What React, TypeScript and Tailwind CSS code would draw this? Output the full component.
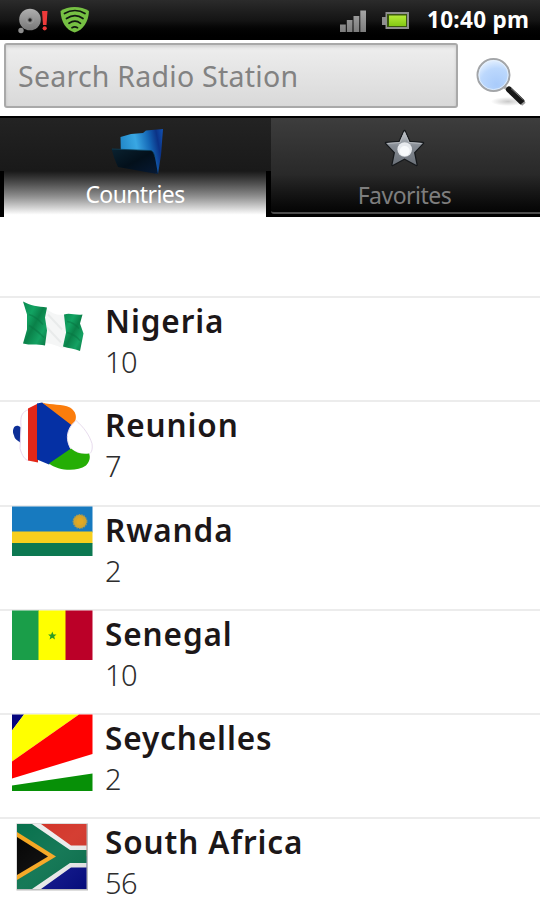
import { useState } from 'react';
import type { ReactNode } from 'react';

type Country = {
  name: string;
  stations: number;
  flag: ReactNode;
};

const NigeriaFlag = () => (
  <>
    <defs>
      <linearGradient id="ngFold" x1="0" y1="0" x2="1" y2="1">
        <stop offset="0" stopColor="#0a8a50" />
        <stop offset="0.3" stopColor="#12a362" />
        <stop offset="0.5" stopColor="#0a8149" />
        <stop offset="0.75" stopColor="#14a263" />
        <stop offset="1" stopColor="#087341" />
      </linearGradient>
    </defs>
    <path d="M45 10 C53 17 58 18 65 17 V51 C58 50 52 45 44 46 Z" fill="#f5f6f6" />
    <path d="M48 17 L62 32 M47 30 L61 45" stroke="#e9ebeb" strokeWidth="2" fill="none" />
    <path d="M23 4 C30 8 38 9 47 10 L45 20 L47 33 L45 48 C37 46 30 48 23 46 L27 32 L27 17 Z" fill="url(#ngFold)" />
    <path d="M64 17 C70 15 75 18 82.500 17 L80 26 L83.500 36 L80 53.500 C74 51 69 51 63 49 L66 35 Z" fill="url(#ngFold)" />
    <path d="M29 17 Q36 19 43 27 M29 28 Q36 32 44 40 M67 24 Q74 25 79 31 M67 35 Q75 37 80 43" stroke="#087442" strokeWidth="1.500" fill="none" opacity="0.5" />
  </>
);

const ReunionFlag = () => (
  <>
    <path d="M21 26 C15 21 11 28 14 34 C15 39 19 39 21 42 Z" fill="#0c2f97" />
    <path d="M29 8 C22 10 20 15 21 24 L20 47 C22 54 25 59 29 59 Z" fill="#ffffff" stroke="#ead8ee" strokeWidth="1" />
    <path d="M28 7 L38 2 V61 L28 59 Z" fill="#e32718" />
    <path d="M37 2 L42 1 L75 22 C67 30 66 39 71 48 L49 63 L37 58 Z" fill="#0530a4" />
    <path d="M42 1 C52 4 62 2 70 6 C76 10 77 15 75 20 L72 24 Z" fill="#fb7d0c" />
    <path d="M76 19 C84 26 89 33 92 42 C93 49 91 52 88 53 C82 53 77 51 71 48 C66 39 66 31 72 23 Z" fill="#fff" stroke="#e8dcee" strokeWidth="1" />
    <path d="M71 47 C77 52 83 53 89 52 C91 56 89 61 86 64 C76 71 58 69 49 62 Z" fill="#25ae05" />
  </>
);

const RwandaFlag = () => (
  <>
    <rect x="12" y="0" width="80.500" height="26" fill="#177abf" />
    <rect x="12" y="25" width="80.500" height="12" fill="#f7cf1d" />
    <rect x="12" y="36.500" width="80.500" height="13" fill="#0c7851" />
    <circle cx="80" cy="15" r="6.700" fill="#d4a52d" stroke="#a29a57" strokeWidth="1.500" strokeDasharray="1.500 1" />
    <circle cx="80" cy="15" r="3.500" fill="#e2a923" />
  </>
);

const SenegalFlag = () => (
  <>
    <rect x="12" y="0" width="27" height="49.500" fill="#1a9e49" />
    <rect x="38.500" y="0" width="27.500" height="49.500" fill="#ffff00" />
    <rect x="65.500" y="0" width="27" height="49.500" fill="#bb0028" />
    <path d="M52.300 21 L53.500 24 H56.500 L54.200 26 L55 29 L52.300 27.300 L49.600 29 L50.400 26 L48.100 24 H51.100 Z" fill="#2c9c25" />
  </>
);

const SeychellesFlag = () => (
  <>
    <rect x="12" y="0" width="80.500" height="76.500" fill="#fff" />
    <path d="M12 0 H24 L12 16 Z" fill="#07067e" />
    <path d="M24 0 H79 L12 47 V16 Z" fill="#ffff00" />
    <path d="M79 0 H92.500 V39.500 L12 64 V47 Z" fill="#ff0000" />
    <path d="M92.500 59 V76.500 H12 V71 Z" fill="#079007" />
  </>
);

const SouthAfricaFlag = () => (
  <>
    <defs>
      <linearGradient id="zaShade" x1="0" y1="0" x2="1" y2="1">
        <stop offset="0" stopColor="#fff" stopOpacity="0" />
        <stop offset="0.5" stopColor="#fff" stopOpacity="0.06" />
        <stop offset="1" stopColor="#000" stopOpacity="0.1" />
      </linearGradient>
    </defs>
    <rect x="16.500" y="5" width="71.500" height="67" fill="#bdbdbd" />
    <rect x="17" y="5.500" width="69.500" height="33" fill="#d23226" />
    <rect x="17" y="38" width="69.500" height="32.500" fill="#060d87" />
    <path d="M31 5.500 H41 L71 27 H86.500 V49 H71 L41 70.500 H31 Z" fill="#ececec" />
    <path d="M17 5.500 H32 L70 31.500 H86.500 V44.500 H70 L32 70.500 H17 Z" fill="#08714d" />
    <path d="M17 13.500 L56 38 L17 61.500 Z" fill="#f5a51d" />
    <path d="M17 18.500 L48 38 L17 56.500 Z" fill="#030303" />
    <rect x="17" y="5.500" width="69.500" height="65" fill="url(#zaShade)" />
  </>
);

const countries: Country[] = [
  { name: 'Nigeria', stations: 10, flag: <NigeriaFlag /> },
  { name: 'Reunion', stations: 7, flag: <ReunionFlag /> },
  { name: 'Rwanda', stations: 2, flag: <RwandaFlag /> },
  { name: 'Senegal', stations: 10, flag: <SenegalFlag /> },
  { name: 'Seychelles', stations: 2, flag: <SeychellesFlag /> },
  { name: 'South Africa', stations: 56, flag: <SouthAfricaFlag /> },
];

function StatusBar() {
  return (
    <header className="flex h-10 shrink-0 items-center bg-linear-to-b from-[#2b2b2b] via-[#151515] to-black">
      <svg width="100" height="40" viewBox="0 0 100 40">
        <defs>
          <linearGradient id="disc" x1="0" y1="0" x2="0" y2="1">
            <stop offset="0" stopColor="#b0b0b0" />
            <stop offset="1" stopColor="#777" />
          </linearGradient>
        </defs>
        <circle cx="30" cy="19.500" r="10.800" fill="url(#disc)" />
        <circle cx="30" cy="20" r="3.500" fill="#888" stroke="#9c9c9c" strokeWidth="1" />
        <circle cx="30" cy="20" r="1.700" fill="#222" />
        <circle cx="21" cy="30.500" r="2.700" fill="#8d8d8d" />
        <path d="M42 11 H47.500 L46.500 25 H43 Z" fill="#ee3a3a" />
        <circle cx="44.700" cy="28.300" r="2.100" fill="#ee3a3a" />
        <path d="M60.500 11 C68 5.500 81 5.500 89 11 C88.500 22 83 30 74.700 32.500 C66 30 61 22 60.500 11 Z" fill="#76c043" />
        <path d="M64.500 13.500 C71 9.500 79 9.500 85 13.500 M66.500 18.500 C72 14.800 78 14.800 83 18.500 M69 23.300 C73 20.500 77 20.500 80.500 23.300 M72 27.700 C74 26.500 75.500 26.500 77.500 27.700" stroke="#101810" strokeWidth="1.700" strokeLinecap="round" fill="none" />
      </svg>
      <svg className="ml-auto" width="80" height="40" viewBox="0 0 80 40">
        <defs>
          <linearGradient id="bars" x1="0" y1="0" x2="0" y2="1">
            <stop offset="0" stopColor="#a5a5a5" />
            <stop offset="1" stopColor="#7c7c7c" />
          </linearGradient>
          <linearGradient id="charge" x1="0" y1="0" x2="0" y2="1">
            <stop offset="0" stopColor="#b5ea37" />
            <stop offset="1" stopColor="#84c915" />
          </linearGradient>
        </defs>
        <path d="M10 24.500 H15.800 V32 H10 Z M16.800 20 H22.500 V32 H16.800 Z M23.500 16 H29.300 V32 H23.500 Z M30.300 10.500 H36 V32 H30.300 Z" fill="url(#bars)" />
        <path d="M52 17 H55.500 V12 H79 V29 H55.500 V25 H52 Z" fill="#8f8f8f" />
        <rect x="57" y="14" width="20" height="13" fill="#3b5710" />
        <rect x="59" y="15.500" width="17" height="10.500" fill="url(#charge)" />
      </svg>
      <span className="ml-[17px] w-[113px] text-[22.5px] leading-10 font-bold tracking-[0.3px] whitespace-nowrap text-white">10:40 pm</span>
    </header>
  );
}

function SearchBar() {
  const [query, setQuery] = useState('');

  return (
    <div className="flex h-[76px] shrink-0 pt-[3px] pl-1">
      <input
        type="text"
        value={query}
        onChange={(e) => setQuery(e.target.value)}
        placeholder="Search Radio Station"
        className="h-[65px] w-[454px] rounded-[3px] border-2 border-[#a9a9a9] bg-linear-to-b from-[#eeeeee] to-[#d9d9d9] px-3 text-[28.5px] tracking-[0.25px] text-[#777] shadow-[inset_0_2px_3px_rgba(0,0,0,0.12)] outline-none placeholder:text-[#828282]"
      />
      <button type="button" aria-label="Search" className="ml-3">
        <svg width="64" height="64" viewBox="470 43 64 64">
          <defs>
            <radialGradient id="lens" cx="0.6" cy="0.8" r="0.85">
              <stop offset="0" stopColor="#a9cbfb" />
              <stop offset="0.6" stopColor="#bcd8fd" />
              <stop offset="1" stopColor="#eef6ff" />
            </radialGradient>
            <radialGradient id="lensShadow">
              <stop offset="0" stopColor="#888" stopOpacity="0.45" />
              <stop offset="1" stopColor="#888" stopOpacity="0" />
            </radialGradient>
          </defs>
          <g transform="translate(0 0.500)">
            <ellipse cx="508" cy="96" rx="17" ry="4.500" fill="url(#lensShadow)" />
            <path d="M504 81 L510 86" stroke="#aaa" strokeWidth="3" />
            <path d="M509 84 L521.500 96" stroke="#161616" strokeWidth="6" strokeLinecap="round" />
            <path d="M511 83 L523.500 94.500" stroke="#777" strokeWidth="1" />
            <path d="M521.500 99.500 L525 96.500" stroke="#999" strokeWidth="2" />
            <circle cx="493.500" cy="69.500" r="16" fill="url(#lens)" stroke="#a3a5a8" strokeWidth="2" />
            <circle cx="493.500" cy="69.500" r="14.600" fill="none" stroke="#e9f2fc" strokeWidth="0.800" />
          </g>
        </svg>
      </button>
    </div>
  );
}

function FolderIcon() {
  return (
    <svg className="relative z-10 shrink-0" width="56" height="48" viewBox="108 127 56 48">
      <defs>
        <linearGradient id="folderBack" x1="0" y1="0.3" x2="1" y2="0.1">
          <stop offset="0" stopColor="#2389c9" />
          <stop offset="0.35" stopColor="#39a7e3" />
          <stop offset="0.65" stopColor="#1467b6" />
          <stop offset="0.85" stopColor="#0b3286" />
          <stop offset="1" stopColor="#124fae" />
        </linearGradient>
        <linearGradient id="folderFront" x1="0" y1="0" x2="1" y2="1">
          <stop offset="0" stopColor="#0a2230" />
          <stop offset="0.5" stopColor="#03101b" />
          <stop offset="1" stopColor="#071a35" />
        </linearGradient>
      </defs>
      <path d="M119.500 136 L130 133 L142 132 L145 129.500 L162 128 L160 154 L157 173 L120 160 Z" fill="url(#folderBack)" />
      <path d="M110.500 148 L120 148.500 L149 149.500 C152 149.500 153 152.500 154 156.500 L157 173 L145 171 L117 166 C114 160 112 153 110.500 148 Z" fill="url(#folderFront)" />
      <path d="M111 148 L149 149.500 C152 149.500 153 152.500 154 156.500" stroke="#0d3f58" strokeWidth="0.800" fill="none" />
    </svg>
  );
}

function StarIcon() {
  return (
    <svg className="shrink-0" width="48" height="48" viewBox="381 127 48 48">
      <defs>
        <linearGradient id="star" x1="0" y1="0" x2="0" y2="1">
          <stop offset="0" stopColor="#c6cacf" />
          <stop offset="0.45" stopColor="#858b93" />
          <stop offset="1" stopColor="#6a7078" />
        </linearGradient>
      </defs>
      <path
        d="M404.500 131 L409.500 142 L423 143 L414 152.500 L416.500 165 L404.500 158.500 L392.500 165 L395 152.500 L386 143 L399.500 142 Z"
        fill="url(#star)"
        stroke="#15181b"
        strokeWidth="2.500"
        paintOrder="stroke"
        strokeLinejoin="round"
      />
      <path d="M387.500 143.500 L400 142.500 L404.500 132 L409 142.500 L421.500 143.500" stroke="#b4b8bd" strokeWidth="1" fill="none" />
      <circle cx="404.700" cy="149.500" r="7.300" fill="#e7eaee" />
      <circle cx="404.700" cy="151" r="5" fill="#f8fafc" />
    </svg>
  );
}

function TabBar() {
  return (
    <nav className="flex h-[101px] shrink-0 border-t-2 border-black">
      <button type="button" className="flex w-[271px] flex-col bg-[#1d1d1d]">
        <span className="flex h-[53px] w-full justify-center bg-linear-to-b from-[#232323] to-[#191919] pt-2.5 pl-0.5">
          <FolderIcon />
        </span>
        <span className="w-full grow bg-black pr-[5px] pl-1">
          <span className="block h-full w-full bg-linear-to-b from-[#191919] via-[#8e8e8e] via-55% to-white to-95% text-center text-[23px] leading-[46px] tracking-[-0.6px] text-white">
            Countries
          </span>
        </span>
      </button>
      <button type="button" className="flex grow flex-col items-center border-b-2 border-black bg-black">
        <span className="flex h-[96px] w-full flex-col items-center rounded-bl-[3px] border-b-2 border-[#4d4d4d] bg-linear-to-b from-[#3d3d3d] via-[#292929] via-60% to-[#050505] pt-[9px] pr-0.5">
          <StarIcon />
          <span className="text-[23px] leading-[40px] tracking-[-0.5px] text-[#7e7e7e]">Favorites</span>
        </span>
      </button>
    </nav>
  );
}

function CountryRow({ country }: { country: Country }) {
  return (
    <li className="flex h-[104.3px] shrink-0 border-t-2 border-[#ececec]">
      <svg className="-mt-px shrink-0" width="105" height="103" viewBox="0 0 105 103">
        <g transform="translate(0 0.500)">{country.flag}</g>
      </svg>
      <div className="grow pt-[3px]">
        <p className="text-[31.5px] leading-10 font-semibold tracking-[0.9px] whitespace-nowrap text-[#1c1718]">
          {country.name}
        </p>
        <p className="text-[29px] leading-[42px] font-light tracking-[-0.5px] text-[#2d2d2d]">{country.stations}</p>
      </div>
    </li>
  );
}

export default function App() {
  return (
    <div className="flex h-[900px] w-[540px] flex-col overflow-hidden bg-white font-['Noto_Sans','Open_Sans',sans-serif]">
      <StatusBar />
      <SearchBar />
      <TabBar />
      <ul className="mt-[79px] flex flex-col">
        {countries.map((country) => (
          <CountryRow key={country.name} country={country} />
        ))}
      </ul>
    </div>
  );
}
